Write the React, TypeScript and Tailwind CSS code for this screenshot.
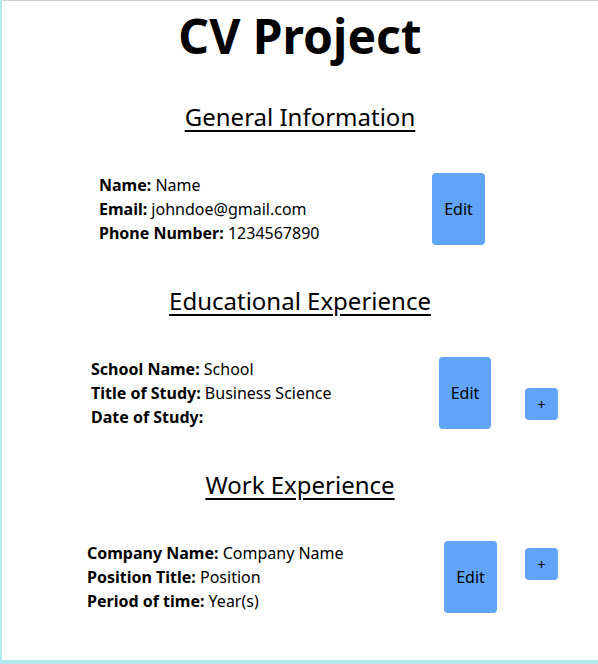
export default function App() {
  return (
    <div className="h-[664px] bg-[#b4e9f1] pb-[4px] pl-[2px] font-['Noto_Sans',sans-serif] text-black">
      <div className="h-full border-t border-[#d0d0d0] bg-white">
        <h1 className="mt-[11px] text-center text-[48px] leading-[48px] font-bold">CV Project</h1>

        <h2 className="mt-[41px] text-center text-[24px] leading-[32px] underline underline-offset-[4px]">General Information</h2>
        <div className="mt-[40px] flex pl-[97px]">
          <div className="w-[333px] text-[16px] leading-[24px]">
            <p><b>Name:</b> Name</p>
            <p><b>Email:</b> johndoe@gmail.com</p>
            <p><b>Phone Number:</b> 1234567890</p>
          </div>
          <button className="w-[53px] rounded bg-[#60a5fa] text-[16px]">Edit</button>
        </div>

        <h2 className="mt-[40px] text-center text-[24px] leading-[32px] underline underline-offset-[4px]">Educational Experience</h2>
        <div className="mt-[40px] flex items-start pl-[89px]">
          <div className="w-[348px] text-[16px] leading-[24px]">
            <p><b>School Name:</b> School</p>
            <p><b>Title of Study:</b> Business Science</p>
            <p><b>Date of Study:</b></p>
          </div>
          <button className="h-[72px] w-[52px] rounded bg-[#60a5fa] text-[16px]">Edit</button>
          <button className="ml-[34px] mt-[31px] h-[32px] w-[33px] rounded bg-[#60a5fa] text-[14px]">+</button>
        </div>

        <h2 className="mt-[40px] text-center text-[24px] leading-[32px] underline underline-offset-[4px]">Work Experience</h2>
        <div className="mt-[40px] flex items-start pl-[85px]">
          <div className="w-[357px] text-[16px] leading-[24px]">
            <p><b>Company Name:</b> Company Name</p>
            <p><b>Position Title:</b> Position</p>
            <p><b>Period of time:</b> Year(s)</p>
          </div>
          <button className="h-[72px] w-[53px] rounded bg-[#60a5fa] text-[16px]">Edit</button>
          <button className="ml-[28px] mt-[7px] h-[32px] w-[33px] rounded bg-[#60a5fa] text-[14px]">+</button>
        </div>
      </div>
    </div>
  )
}
